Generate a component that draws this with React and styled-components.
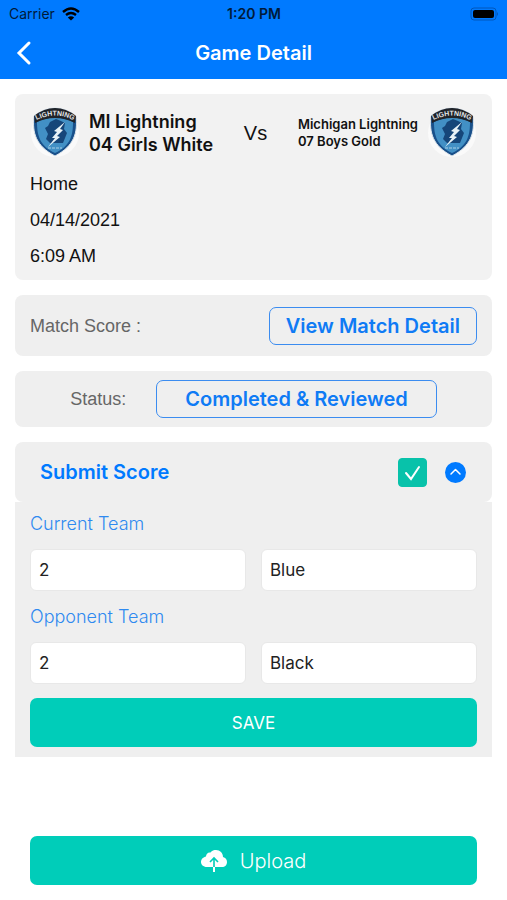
import { useState } from "react";
import styled, { createGlobalStyle } from "styled-components";

const TeamLogo = ({ id }) => (
  <Logo viewBox="0 0 50 54" role="img" aria-label="Lightning crest">
    <ellipse cx="25" cy="27" rx="24" ry="24" fill="#fafafa" />
    <path
      d="M4 10 Q14 2 25 2 Q36 2 46 10 C48 27 44 40 25 50 C6 40 2 27 4 10Z"
      fill="#19508a"
      stroke="#dce5ec"
      strokeWidth="1"
    />
    <path d="M7 16 Q25 7 43 16 C43 30 40 40 25 47 C10 40 7 30 7 16Z" fill="#4290c5" />
    <path
      d="M20 16 L26 13 L31 15 L35 17 L34 23 L37 27 L33 37 L20 37 L16 33 L18 28 L15 22 L18 20Z"
      fill="#164679"
    />
    <path d="M4 10 Q14 2 25 2 Q36 2 46 10 L45 17 Q25 7 5 17Z" fill="#202329" />
    <path id={id} d="M5 15 Q25 4 45 15" fill="none" />
    <text fill="#e6e8ea" fontSize="7" fontWeight="700" textAnchor="middle">
      <textPath href={`#${id}`} startOffset="50%">
        LIGHTNING
      </textPath>
    </text>
    <path d="M35 16 L24 25 L27 26 L22 32 L25 32 L18 41 L30 31 L27 30 L33 24 L30 23Z" fill="#e8f2f7" />
    <path d="M18 42 H32" stroke="#a9cfe5" strokeDasharray="3 1" />
  </Logo>
);

const ScoreFields = ({ title, name, score, color }) => (
  <FieldSet>
    <Legend>{title}</Legend>
    <FieldRow>
      <TextInput aria-label={`${title} score`} name={`${name}Score`} defaultValue={score} />
      <TextInput aria-label={`${title} color`} name={`${name}Color`} defaultValue={color} />
    </FieldRow>
  </FieldSet>
);

const App = () => {
  const [open, setOpen] = useState(true);
  const [submitted, setSubmitted] = useState(true);

  return (
    <Screen>
      <GlobalStyle />
      <Header>
        <StatusBar>
          <Carrier>
            Carrier
            <svg width="18" height="14" viewBox="0 0 18 14" fill="none" stroke="#000" strokeWidth="2.4">
              <path d="M1 5 Q9 -2 17 5" />
              <path d="M4 8 Q9 4 14 8" />
              <path d="M9 13.5 L5.8 10.4 Q9 8 12.2 10.4Z" fill="#000" stroke="none" />
            </svg>
          </Carrier>
          <Time>1:20 PM</Time>
          <Battery viewBox="0 0 29 14">
            <rect x="1" y="1" width="25" height="12" rx="3" fill="none" stroke="#0057bb" strokeWidth="1" />
            <rect x="3" y="3" width="21" height="8" rx="2" fill="#000" />
            <path d="M27 5 Q29 7 27 9Z" fill="#0057bb" />
          </Battery>
        </StatusBar>
        <NavBar>
          <BackButton aria-label="Back">
            <svg width="16" height="26" viewBox="0 0 16 26" fill="none" stroke="#fff" strokeWidth="3">
              <path d="M13 3 L3 13 L13 23" strokeLinecap="round" strokeLinejoin="miter" />
            </svg>
          </BackButton>
          <Title>Game Detail</Title>
        </NavBar>
      </Header>

      <Content>
        <GameCard>
          <Teams>
            <TeamLogo id="homeArc" />
            <TeamName>
              MI Lightning
              <br />
              04 Girls White
            </TeamName>
            <Versus>Vs</Versus>
            <TeamName $small>
              Michigan Lightning
              <br />
              07 Boys Gold
            </TeamName>
            <TeamLogo id="awayArc" />
          </Teams>
          <Info>Home</Info>
          <Info>04/14/2021</Info>
          <Info>6:09 AM</Info>
        </GameCard>

        <MatchCard>
          <Label>Match Score :</Label>
          <OutlineButton>View Match Detail</OutlineButton>
        </MatchCard>

        <StatusCard>
          <Label>Status:</Label>
          <OutlineButton $wide>Completed &amp; Reviewed</OutlineButton>
        </StatusCard>

        <section>
          <SubmitHeader>
            <SubmitTitle>Submit Score</SubmitTitle>
            <CheckWrap>
              <CheckBox
                type="checkbox"
                aria-label="Score submitted"
                checked={submitted}
                onChange={(e) => setSubmitted(e.target.checked)}
              />
              {submitted && (
                <CheckMark viewBox="0 0 29 29">
                  <path d="M8 15 L13 21 L21 9" />
                </CheckMark>
              )}
            </CheckWrap>
            <ToggleButton aria-label="Toggle score form" aria-expanded={open} onClick={() => setOpen(!open)}>
              <svg width="21" height="21" viewBox="0 0 21 21" fill="none" stroke="#fff" strokeWidth="1.5">
                <path
                  d={open ? "M6 12 L10.5 7.5 L15 12" : "M6 9 L10.5 13.5 L15 9"}
                  strokeLinecap="round"
                  strokeLinejoin="round"
                />
              </svg>
            </ToggleButton>
          </SubmitHeader>
          {open && (
            <ScoreForm onSubmit={(e) => e.preventDefault()}>
              <ScoreFields title="Current Team" name="current" score="2" color="Blue" />
              <ScoreFields title="Opponent Team" name="opponent" score="2" color="Black" />
              <SolidButton type="submit">SAVE</SolidButton>
            </ScoreForm>
          )}
        </section>
      </Content>

      <Footer>
        <SolidButton $large>
          <svg width="26" height="24" viewBox="0 0 26 24">
            <path
              d="M6 18 C2 18 0 15.5 0 13 C0 10 2.5 8 5 7.5 C5 5 7 3 9.5 3.5 C11 1.5 13 1 15 1 C19 1 22 4 22 8 C24.5 8.5 26 10.5 26 13 C26 16 24 18 21 18Z"
              fill="#fff"
            />
            <path d="M13 18 V9.5 M9 13 L13 9 L17 13" fill="none" stroke="#00cdb9" strokeWidth="1.6" />
            <path d="M13 18 V23" stroke="#fff" strokeWidth="2" />
          </svg>
          Upload
        </SolidButton>
      </Footer>
    </Screen>
  );
};

export default App;

const GlobalStyle = createGlobalStyle`
  * {
    box-sizing: border-box;
  }
  body {
    margin: 0;
    background: #fff;
    color: #111;
    font-family: "Liberation Sans", Arial, sans-serif;
  }
  button, input {
    font-family: inherit;
    margin: 0;
  }
  button {
    cursor: pointer;
  }
`;
const Screen = styled.div`
  min-height: 100vh;
  display: flex;
  flex-direction: column;
`;
const Header = styled.header`
  background: #007aff;
`;
const StatusBar = styled.div`
  height: 27px;
  padding: 0 8px 0 9px;
  display: grid;
  grid-template-columns: 1fr auto 1fr;
  align-items: center;
  color: #001a3a;
  font-family: Inter, sans-serif;
  font-size: 14px;
`;
const Carrier = styled.span`
  display: flex;
  align-items: center;
  gap: 7px;
`;
const Time = styled.span`
  font-weight: 600;
`;
const Battery = styled.svg`
  width: 29px;
  height: 14px;
  justify-self: end;
`;
const NavBar = styled.div`
  height: 52px;
  padding: 0 16px;
  display: grid;
  grid-template-columns: 1fr auto 1fr;
  align-items: center;
`;
const BackButton = styled.button`
  justify-self: start;
  display: flex;
  padding: 0;
  border: 0;
  background: none;
`;
const Title = styled.h1`
  margin: 0;
  color: #fff;
  font-family: Inter, sans-serif;
  font-size: 20px;
  font-weight: 600;
`;
const Content = styled.main`
  padding: 15px;
  display: flex;
  flex-direction: column;
  gap: 15px;
`;
const Card = styled.section`
  padding: 12px 15px;
  border-radius: 8px;
  background: #efefef;
`;
const GameCard = styled(Card)`
  padding-bottom: 6px;
  background: #f2f2f2;
`;
const Teams = styled.div`
  display: flex;
  align-items: center;
  gap: 9px;
  margin-bottom: 6px;
`;
const Logo = styled.svg`
  width: 50px;
  height: 54px;
  flex: none;
`;
const TeamName = styled.p`
  margin: 0;
  font-family: Inter, sans-serif;
  font-size: ${({ $small }) => ($small ? "13px" : "18px")};
  line-height: ${({ $small }) => ($small ? "17px" : "23px")};
  font-weight: 600;
  white-space: nowrap;
`;
const Versus = styled.span`
  flex: 1;
  text-align: center;
  font-size: 20px;
`;
const Info = styled.p`
  margin: 0;
  font-size: 18px;
  line-height: 36px;
`;
const MatchCard = styled(Card)`
  padding-bottom: 11px;
  display: flex;
  align-items: center;
  justify-content: space-between;
`;
const StatusCard = styled(Card)`
  padding: 9px 15px;
  display: flex;
  align-items: center;
  justify-content: center;
  gap: 30px;
`;
const Label = styled.span`
  color: #666;
  font-size: 18px;
`;
const OutlineButton = styled.button`
  height: 38px;
  padding: 0 ${({ $wide }) => ($wide ? 28 : 16)}px;
  border: 1px solid #3b8cf0;
  border-radius: 7px;
  background: none;
  color: #0f7bf5;
  font-family: Inter, sans-serif;
  font-size: 20px;
  font-weight: 600;
`;
const SubmitHeader = styled(Card)`
  height: 60px;
  padding: 0 26px 0 25px;
  display: flex;
  align-items: center;
  gap: 18px;
`;
const SubmitTitle = styled.h2`
  flex: 1;
  margin: 0;
  color: #007aff;
  font-family: Inter, sans-serif;
  font-size: 20px;
  font-weight: 600;
`;
const CheckWrap = styled.span`
  display: grid;
  > * {
    grid-area: 1 / 1;
  }
`;
const CheckBox = styled.input`
  appearance: none;
  width: 29px;
  height: 29px;
  border: 1px solid #08c2aa;
  border-radius: 4px;
  &:checked {
    background: #08c2aa;
  }
`;
const CheckMark = styled.svg`
  width: 29px;
  height: 29px;
  fill: none;
  stroke: #fff;
  stroke-width: 2;
  stroke-linecap: round;
  pointer-events: none;
`;
const ToggleButton = styled.button`
  display: flex;
  padding: 0;
  border: 0;
  border-radius: 50%;
  background: #007aff;
`;
const ScoreForm = styled.form`
  padding: 10px 15px;
  background: #efefef;
`;
const FieldSet = styled.fieldset`
  min-width: 0;
  margin: 0 0 14px;
  padding: 0;
  border: 0;
`;
const Legend = styled.legend`
  padding: 0;
  margin-bottom: 13px;
  color: #2f8af0;
  font-family: Inter, sans-serif;
  font-size: 18px;
  font-weight: 300;
  line-height: 24px;
`;
const FieldRow = styled.div`
  display: grid;
  grid-template-columns: 1fr 1fr;
  gap: 15px;
`;
const TextInput = styled.input`
  width: 100%;
  min-width: 0;
  height: 42px;
  padding: 0 8px;
  border: 1px solid #e8e8e8;
  border-radius: 6px;
  background: #fff;
  color: #222;
  && {
    font-family: Inter, sans-serif;
  }
  font-size: 17px;
`;
const SolidButton = styled.button`
  width: 100%;
  height: 49px;
  display: flex;
  align-items: center;
  justify-content: center;
  gap: 13px;
  border: 0;
  border-radius: 7px;
  background: #00cdb9;
  color: #fff;
  font-family: Inter, sans-serif;
  font-size: ${({ $large }) => ($large ? "20px" : "17px")};
  font-weight: ${({ $large }) => ($large ? 300 : 400)};
`;
const Footer = styled.footer`
  margin-top: auto;
  padding: 0 30px 15px;
`;
